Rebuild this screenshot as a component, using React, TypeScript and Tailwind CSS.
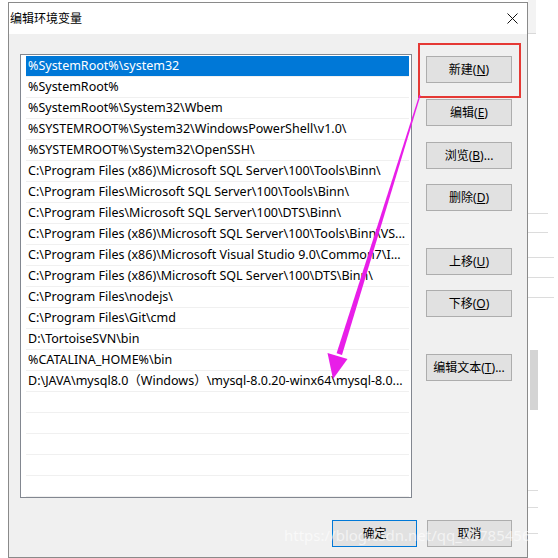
import React from "react";

const rows = [
  "%SystemRoot%\\system32",
  "%SystemRoot%",
  "%SystemRoot%\\System32\\Wbem",
  "%SYSTEMROOT%\\System32\\WindowsPowerShell\\v1.0\\",
  "%SYSTEMROOT%\\System32\\OpenSSH\\",
  "C:\\Program Files (x86)\\Microsoft SQL Server\\100\\Tools\\Binn\\",
  "C:\\Program Files\\Microsoft SQL Server\\100\\Tools\\Binn\\",
  "C:\\Program Files\\Microsoft SQL Server\\100\\DTS\\Binn\\",
  "C:\\Program Files (x86)\\Microsoft SQL Server\\100\\Tools\\Binn\\VS...",
  "C:\\Program Files (x86)\\Microsoft Visual Studio 9.0\\Common7\\I...",
  "C:\\Program Files (x86)\\Microsoft SQL Server\\100\\DTS\\Binn\\",
  "C:\\Program Files\\nodejs\\",
  "C:\\Program Files\\Git\\cmd",
  "D:\\TortoiseSVN\\bin",
  "%CATALINA_HOME%\\bin",
  "D:\\JAVA\\mysql8.0（Windows）\\mysql-8.0.20-winx64\\mysql-8.0...",
  "",
  "",
  "",
  "",
  "",
];

const Btn = ({
  label,
  hot,
  tail = ")",
  className = "",
}: {
  label: string;
  hot: string;
  tail?: string;
  className?: string;
}) => (
  <div
    className={`h-[27px] w-[86px] border border-[#adadad] bg-[#e1e1e1] flex items-center justify-center text-[12px] text-black ${className}`}
  >
    {label}(<span className="underline">{hot}</span>
    {tail}
  </div>
);

export default function App() {
  return (
    <div
      className="relative w-[558px] h-[558px] overflow-hidden bg-white flex"
      style={{ fontFamily: '"Noto Sans", "Noto Sans CJK SC", sans-serif' }}
    >
      <div className="w-[8px] shrink-0" />
      <div className="w-[520px] shrink-0 mt-[2px] border border-[#8a8a8a] flex flex-col bg-[#f0f0f0]">
        {/* title bar */}
        <div className="h-[31px] bg-white flex items-center justify-between pl-[1px] pr-[9px]">
          <span className="text-[12px] text-black">编辑环境变量</span>
          <svg width="11" height="11" viewBox="0 0 11 11">
            <path d="M0.5 0.5 L10.5 10.5 M10.5 0.5 L0.5 10.5" stroke="#111" strokeWidth="1" />
          </svg>
        </div>
        <div className="flex pt-[20px] pl-[11px]">
          {/* list */}
          <div className="w-[392px] h-[444px] border border-[#828790] bg-white pt-[1px] pl-[5px] pr-[2px] overflow-hidden">
            {rows.map((r, i) => (
              <div
                key={i}
                className={`h-[21px] border-b border-[#f0f0f0] pl-[2px] text-[12.5px] leading-[20px] whitespace-nowrap ${
                  i === 0 ? "bg-[#0078d7] text-white" : "text-black"
                }`}
              >
                {r}
              </div>
            ))}
          </div>
          {/* buttons */}
          <div className="flex flex-col pl-[14px] pt-[2px]">
            <Btn label="新建" hot="N" />
            <Btn label="编辑" hot="E" className="mt-[16px]" />
            <Btn label="浏览" hot="B" tail=")..." className="mt-[16px]" />
            <Btn label="删除" hot="D" className="mt-[15px]" />
            <Btn label="上移" hot="U" className="mt-[37px]" />
            <Btn label="下移" hot="O" className="mt-[15px]" />
            <Btn label="编辑文本" hot="T" tail=")..." className="mt-[37px]" />
          </div>
        </div>
        {/* bottom buttons */}
        <div className="flex pl-[323px] pt-[22px] gap-[10px]">
          <div className="h-[27px] w-[85px] border border-[#0078d7] bg-[#e1e1e1] flex items-center justify-center text-[12px] text-black">
            确定
          </div>
          <div className="h-[27px] w-[85px] border border-[#adadad] bg-[#e1e1e1] flex items-center justify-center text-[12px] text-black">
            取消
          </div>
        </div>
      </div>
      {/* background window edge */}
      <div className="flex-1 relative bg-white">
        <div className="h-[34px] border-b border-[#d9d9d9] bg-[#f3f3f3] w-[8px]" />
        <div className="absolute left-[2px] top-[350px] w-[8px] h-[60px] bg-[#d4d4d4]" />
        <div className="absolute left-0 top-[213px] w-[20px] h-px bg-[#dcdcdc]" />
        <div className="absolute left-0 top-[232px] w-[20px] h-px bg-[#dcdcdc]" />
        <div className="absolute left-0 top-[257px] w-[26px] h-px bg-[#dcdcdc]" />
        <div className="absolute left-0 top-[277px] w-[26px] h-px bg-[#dcdcdc]" />
        <div className="absolute left-0 top-[297px] w-[26px] h-px bg-[#dcdcdc]" />
        <div className="absolute left-0 top-[490px] w-[10px] h-px bg-[#dcdcdc]" />
        <div className="absolute left-0 top-[507px] w-[10px] h-px bg-[#dcdcdc]" />
        <div className="absolute left-0 top-[533px] w-[10px] h-px bg-[#dcdcdc]" />
      </div>

      {/* red highlight */}
      <div className="absolute left-[418px] top-[43px] w-[103px] h-[55px] border-2 border-[#e53935]" />

      {/* arrow */}
      <svg className="absolute left-0 top-0 pointer-events-none" width="558" height="558">
        <polygon points="420.6,95.2 342,355 336.6,353.2 419.4,94.8" fill="#e81ee8" />
        <polygon points="333,379 327.5,353 347.5,359" fill="#e81ee8" />
      </svg>

      {/* watermark */}
      <div className="absolute left-[284px] top-[524px] text-[15px] text-white opacity-60 whitespace-nowrap pointer-events-none">
        https://blog.csdn.net/qq_43785456
      </div>
    </div>
  );
}
